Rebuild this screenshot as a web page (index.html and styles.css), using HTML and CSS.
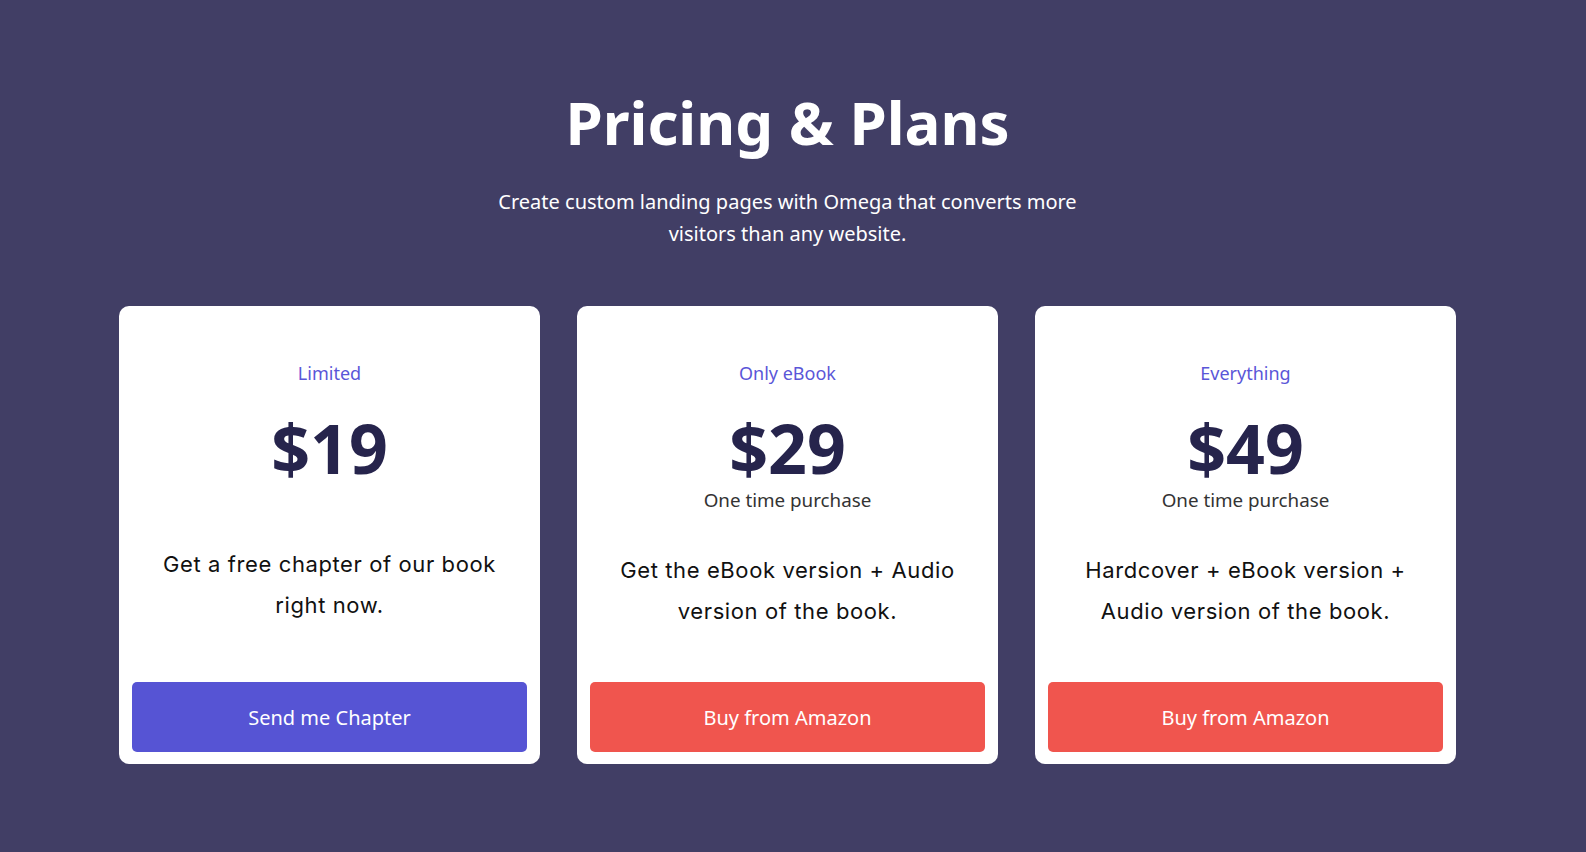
FILE: index.html
```html
<!DOCTYPE html>
<html lang="en">
<head>
<meta charset="utf-8">
<title>Pricing &amp; Plans</title>
<link rel="stylesheet" href="styles.css">
</head>
<body>
<section class="pricing">
  <div class="wrap">
    <header class="intro">
      <h1 class="title">Pricing &amp; Plans</h1>
      <p class="lead">Create custom landing pages with Omega that converts more<br>visitors than any website.</p>
    </header>
    <div class="cards">
      <article class="card">
        <div class="label">Limited</div>
        <div class="price price--solo">$19</div>
        <p class="desc">Get a free chapter of our book right now.</p>
        <a class="btn btn--blue" href="#">Send me Chapter</a>
      </article>
      <article class="card">
        <div class="label">Only eBook</div>
        <div class="price">$29</div>
        <div class="sub">One time purchase</div>
        <p class="desc">Get the eBook version + Audio version of the book.</p>
        <a class="btn btn--red" href="#">Buy from Amazon</a>
      </article>
      <article class="card">
        <div class="label">Everything</div>
        <div class="price">$49</div>
        <div class="sub">One time purchase</div>
        <p class="desc">Hardcover + eBook version + Audio version of the book.</p>
        <a class="btn btn--red" href="#">Buy from Amazon</a>
      </article>
    </div>
  </div>
</section>
</body>
</html>
```

FILE: styles.css
```css
* { box-sizing: border-box; }
html, body { margin: 0; padding: 0; }
body {
  background: #413e65;
  font-family: "Noto Sans", "Open Sans", sans-serif;
  height: 852px;
  overflow: hidden;
}
.pricing { padding-top: 86px; }
.wrap {
  width: 1337px;
  margin-left: 119px;
}
.intro { text-align: center; color: #fff; }
.title {
  margin: 0;
  font-size: 60px;
  line-height: 72px;
  font-weight: 700;
}
.lead {
  margin: 28px 0 0;
  font-size: 20px;
  line-height: 32px;
}
.cards {
  margin-top: 56px;
  display: grid;
  grid-template-columns: repeat(3, 421px);
  column-gap: 37px;
}
.card {
  background: #fff;
  border-radius: 10px;
  height: 458px;
  padding: 54px 13px 12px;
  display: flex;
  flex-direction: column;
  align-items: center;
  text-align: center;
}
.label {
  color: #5a56d8;
  font-size: 18px;
  line-height: 27px;
}
.price {
  margin-top: 28px;
  color: #26244c;
  font-size: 68px;
  line-height: 66px;
  font-weight: 700;
}
.price--solo { margin-bottom: 27px; }
.sub {
  margin-top: 6px;
  color: #333;
  font-size: 18.8px;
  line-height: 27px;
}
.desc {
  margin: 36px 0 0;
  padding: 0 30px;
  color: #111;
  font-family: "Inter", "Liberation Sans", sans-serif;
  font-size: 22px;
  line-height: 41px;
  letter-spacing: 0.6px;
}
.btn {
  margin-top: auto;
  align-self: stretch;
  height: 70px;
  display: flex;
  align-items: center;
  justify-content: center;
  border-radius: 5px;
  color: #fff;
  text-decoration: none;
  font-size: 20px;
}
.btn--blue { background: #5654d4; }
.btn--red { background: #f0554e; }
```
